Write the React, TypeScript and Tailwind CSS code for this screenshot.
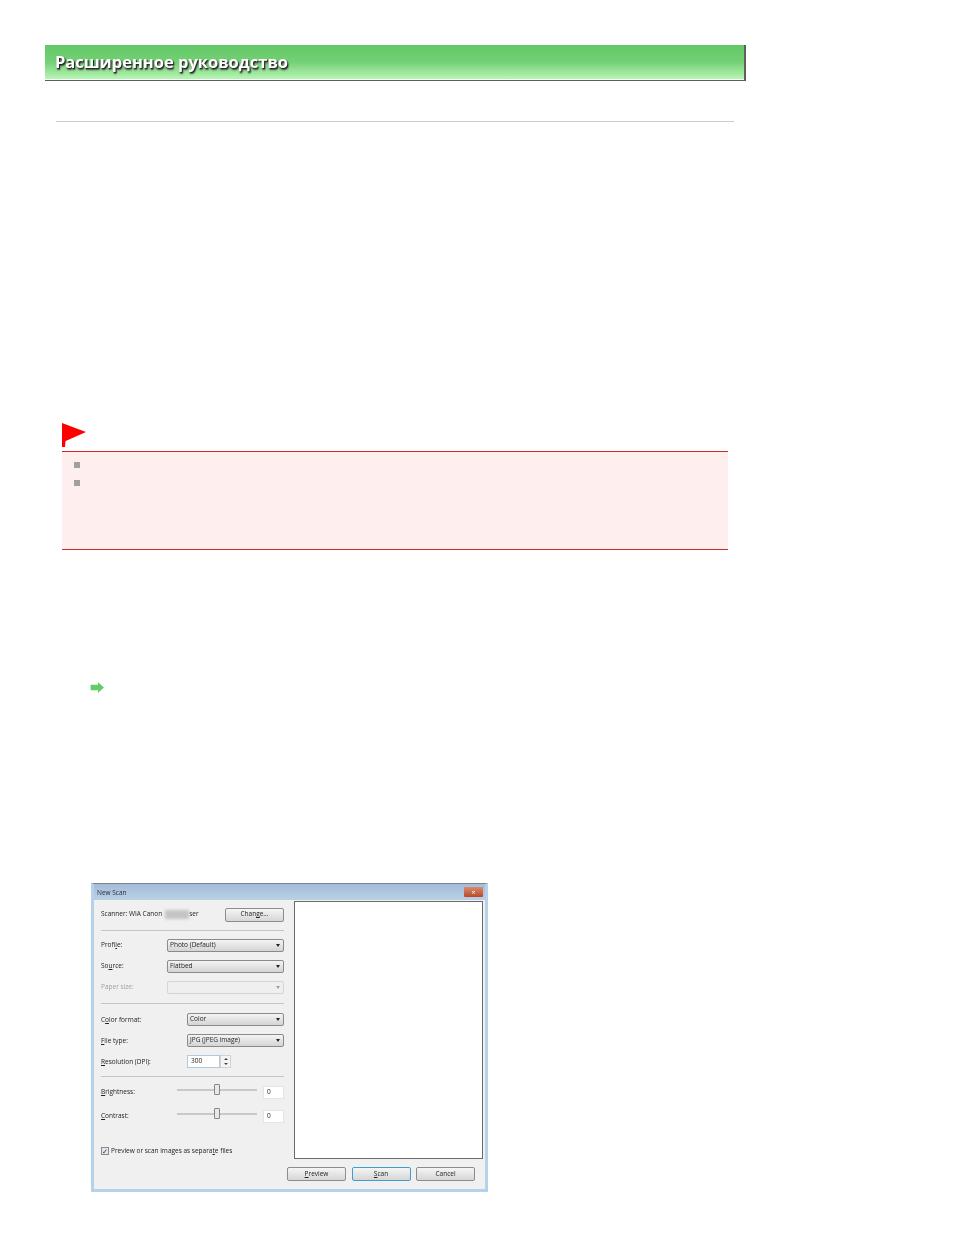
const Key = ({ children }: { children: string }) => (
  <span className="underline underline-offset-1">{children}</span>
)

const Select = ({ value, disabled, width }: { value?: string; disabled?: boolean; width: string }) => (
  <div
    className={`${width} h-[13px] px-[2px] flex items-center justify-between rounded-[2px] border ${
      disabled
        ? 'border-[#d4d4d4] bg-[#efefef] text-[#a0a0a0]'
        : 'border-[#8a8a8a] bg-gradient-to-b from-[#f4f4f4] to-[#d4d4d4] text-[#222222]'
    }`}
  >
    <span className="font-medium">{value}</span>
    <span
      className={`w-0 h-0 mr-[1px] border-x-[2.5px] border-x-transparent border-t-[3px] ${
        disabled ? 'border-t-[#a0a0a0]' : 'border-t-[#222222]'
      }`}
    />
  </div>
)

const Button = ({ children, primary }: { children: React.ReactNode; primary?: boolean }) => (
  <div
    className={`w-[59px] h-[14px] flex items-center justify-center rounded-[2px] border text-[#222222] font-medium bg-gradient-to-b from-[#f5f5f5] to-[#d6d6d6] ${
      primary ? 'border-[#3c9fd0]' : 'border-[#8c8c8c]'
    }`}
  >
    {children}
  </div>
)

const Separator = () => <div className="h-px bg-[#c4c4c4]" />

const Slider = ({ label }: { label: React.ReactNode }) => (
  <div className="flex items-center h-[13px]">
    <span className="w-[76px]">{label}</span>
    <div className="relative w-[80px] h-[2px] mb-[6px] bg-[#c9c9c9]">
      <div className="absolute left-[37px] top-[-5px] w-[6px] h-[11px] rounded-[1px] border border-[#858585] bg-[#e9e9e9]" />
    </div>
    <div className="ml-[6px] w-[21px] h-[13px] pl-[3px] flex items-center border border-[#e4e4e4] bg-white">0</div>
  </div>
)

const NewScanDialog = () => (
  <div className="ml-[91px] mt-[190px] w-[397px] h-[309px] flex flex-col border-t border-t-[#7f8285] border-x-[3px] border-x-[#b4d3ea] border-b-[3px] border-b-[#b4d3ea] font-['Open_Sans',sans-serif] text-[6.5px] leading-none text-[#222222] blur-[0.4px]">
    <div className="h-[16px] shrink-0 pl-[3px] pr-[2px] pt-[3px] flex items-center justify-between bg-gradient-to-b from-[#a3bcd9] to-[#b9d0e6] text-[#1d2b3a]">
      <span className="font-medium">New Scan</span>
      <div className="w-[19px] h-[10px] -mt-[3px] flex items-center justify-center rounded-[1px] bg-gradient-to-b from-[#d98a6c] to-[#b8482a] text-white text-[7px]">
        ×
      </div>
    </div>

    <div className="flex-1 bg-[#f0f0f0] flex flex-col">
      <div className="flex h-[259px]">
        {/* Settings column */}
        <div className="w-[200px] shrink-0 pl-[7px] pr-[10px] pt-[8px] flex flex-col">
          <div className="flex items-center justify-between h-[13px]">
            <span className="flex items-center font-medium">
              Scanner: WIA Canon
              <span className="ml-[3px] w-[24px] h-[9px] bg-[#c4c4c4] blur-[1.5px]" />
              ser
            </span>
            <Button>
              Chan<Key>g</Key>e...
            </Button>
          </div>
          <div className="mt-[9px] mb-[8px]">
            <Separator />
          </div>
          <div className="flex flex-col gap-[8px]">
            <div className="flex items-center justify-between">
              <span className="font-medium">
                Profi<Key>l</Key>e:
              </span>
              <Select value="Photo (Default)" width="w-[117px]" />
            </div>
            <div className="flex items-center justify-between">
              <span className="font-medium">
                So<Key>u</Key>rce:
              </span>
              <Select value="Flatbed" width="w-[117px]" />
            </div>
            <div className="flex items-center justify-between text-[#a0a0a0]">
              <span>Paper size:</span>
              <Select disabled width="w-[117px]" />
            </div>
          </div>
          <div className="mt-[9px] mb-[9px]">
            <Separator />
          </div>
          <div className="flex flex-col gap-[8px] font-medium">
            <div className="flex items-center justify-between">
              <span className="pt-[2px]">
                C<Key>o</Key>lor format:
              </span>
              <Select value="Color" width="w-[97px]" />
            </div>
            <div className="flex items-center justify-between">
              <span className="pt-[2px]">
                <Key>F</Key>ile type:
              </span>
              <Select value="JPG (JPEG image)" width="w-[97px]" />
            </div>
            <div className="flex items-center">
              <span className="w-[86px] pt-[2px]">
                <Key>R</Key>esolution (DPI):
              </span>
              <div className="w-[33px] h-[13px] pl-[3px] flex items-center border border-[#a9cbe4] bg-white">300</div>
              <div className="w-[11px] h-[13px] flex flex-col items-center justify-center gap-[3px] border border-[#d2d2d2] bg-[#f4f4f4]">
                <span className="w-0 h-0 border-x-[2px] border-x-transparent border-b-[2px] border-b-[#444444]" />
                <span className="w-0 h-0 border-x-[2px] border-x-transparent border-t-[2px] border-t-[#444444]" />
              </div>
            </div>
          </div>
          <div className="mt-[8px] mb-[9px]">
            <Separator />
          </div>
          <div className="flex flex-col gap-[11px] font-medium">
            <Slider
              label={
                <>
                  <Key>B</Key>rightness:
                </>
              }
            />
            <Slider
              label={
                <>
                  <Key>C</Key>ontrast:
                </>
              }
            />
          </div>
          <div className="mt-[24px] flex items-center gap-[2px] font-medium">
            <div className="w-[8px] h-[8px] flex items-center justify-center border border-[#8a8a8a] bg-[#dfe7ef] text-[7px] text-[#333333]">
              ✓
            </div>
            <span>
              Preview or scan images as separa<Key>t</Key>e files
            </span>
          </div>
        </div>

        {/* Preview pane */}
        <div className="w-[189px] h-[258px] mt-px border-[1.5px] border-[#6a6a6a] bg-white" />
      </div>

      <div className="mt-[8px] ml-[193px] flex gap-[5.5px]">
        <Button>
          <Key>P</Key>review
        </Button>
        <Button primary>
          <Key>S</Key>can
        </Button>
        <Button>Cancel</Button>
      </div>
    </div>
  </div>
)

const App = () => {
  return (
    <div className="w-[954px] h-[1235px] overflow-hidden bg-white pt-[44px]">
      {/* Title bar */}
      <div className="ml-[45px] w-[701px] h-[36px] border-b border-b-[#5a5f5a] border-r-2 border-r-[#5f5f5f]">
        <div className="h-[34px] mt-px pl-[10px] flex items-center bg-gradient-to-b from-[#62c864] via-[#74d076] to-[#b6f6b4]">
          <h1 className="font-['Open_Sans',sans-serif] text-[16.5px] font-bold text-white leading-none [text-shadow:1px_1px_1px_#222222,1px_2px_2px_#444444] blur-[0.4px]">
            Расширенное руководство
          </h1>
        </div>
      </div>

      <div className="ml-[56px] mt-[40px] w-[678px] h-px bg-[#cccccc]" />

      {/* Caution block */}
      <div className="ml-[62px] mt-[301px] w-[666px]">
        <svg width="25" height="25" viewBox="0 0 25 25" className="block">
          <path d="M0 0 L24 9 L6 17 L3.5 18 L3 24 L0 24 Z" fill="#fe0000" />
        </svg>
        <div className="mt-[3px] h-[99px] border-y border-[#cc2a22] bg-[#feeeee] pl-[12px] pt-[10px] flex flex-col gap-[12px]">
          <div className="w-[6px] h-[6px] bg-[#a0a0a0]" />
          <div className="w-[6px] h-[6px] bg-[#a0a0a0]" />
        </div>
      </div>

      {/* Link arrow */}
      <svg width="15" height="11" viewBox="0 0 15 12" className="block ml-[90px] mt-[132px]">
        <path d="M0 3 H8 V0 L14.5 6 L8 12 V9 H0 Z" fill="#62cc6a" />
      </svg>

      <NewScanDialog />
    </div>
  )
}

export default App
